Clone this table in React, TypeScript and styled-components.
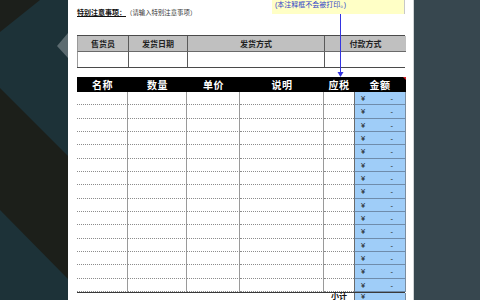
import React from 'react';
import styled, { createGlobalStyle } from 'styled-components';

const GlobalStyle = createGlobalStyle`
  html, body {
    margin: 0;
    padding: 0;
  }
  body {
    width: 480px;
    height: 300px;
    overflow: hidden;
    font-family: "Liberation Sans", "Noto Sans CJK SC", sans-serif;
  }
`;

const Screen = styled.div`
  display: flex;
  width: 480px;
  height: 300px;
  overflow: hidden;
`;

const LeftBackdrop = styled.div`
  flex: none;
  width: 68px;
  height: 300px;
  background: #1d3238;
  svg {
    display: block;
  }
`;

const RightBackdrop = styled.div`
  flex: 1;
  background: #37474f;
`;

const Sheet = styled.div`
  position: relative;
  flex: none;
  width: 346px;
  box-sizing: border-box;
  padding: 0 8px 0 9px;
  background: #fff;
  border-right: 1px solid #cfd4d6;
`;

const NoteLine = styled.div`
  display: flex;
  align-items: baseline;
  padding-top: 7px;
  height: 12px;
  line-height: 12px;
`;

const NoteLabel = styled.span`
  font-size: 7px;
  font-weight: 700;
  color: #111;
  text-decoration: underline;
`;

const NoteHint = styled.span`
  font-size: 6.4px;
  color: #333;
`;

const InfoTable = styled.div`
  display: grid;
  grid-template-columns: 51px 59px 137px 82px;
  grid-template-rows: 16px 15px;
  margin-top: 16px;
  border-top: 1px solid #4a4a4a;
  border-bottom: 1px solid #4a4a4a;
  border-right: 1px solid #4a4a4a;
`;

const InfoCell = styled.div<{ $head?: boolean; $first?: boolean }>`
  display: flex;
  align-items: center;
  justify-content: center;
  box-sizing: border-box;
  background: ${(p) => (p.$head ? '#c0c0c0' : '#fff')};
  border-left: 1px solid ${(p) => (p.$first ? '#9a9a9a' : '#5a5a5a')};
  border-bottom: ${(p) => (p.$head ? '1px solid #6a6a6a' : 'none')};
  font-size: 8px;
  font-weight: 700;
  color: #222;
`;

const ItemTable = styled.div`
  margin-top: 9px;
`;

const Row = styled.div<{ $height: number }>`
  display: grid;
  grid-template-columns: 51px 59px 53px 84px 30px 52px;
  height: ${(p) => p.$height}px;
`;

const HeadCell = styled.div`
  position: relative;
  display: flex;
  align-items: center;
  justify-content: center;
  background: #000;
  color: #fff;
  font-size: 10px;
  font-weight: 700;
  letter-spacing: 0.5px;
`;

const RedMark = styled.span`
  position: absolute;
  top: 0;
  right: 0;
  width: 0;
  height: 0;
  border-top: 3px solid #d8202a;
  border-left: 3px solid transparent;
`;

const BodyCell = styled.div<{ $last?: boolean }>`
  box-sizing: border-box;
  background: #fff;
  border-bottom: 1px dotted #8c8c8c;
  border-right: ${(p) => (p.$last ? 'none' : '1px solid #9a9a9a')};
`;

const MoneyCell = styled.div`
  display: flex;
  align-items: center;
  justify-content: space-between;
  box-sizing: border-box;
  padding: 0 12px 0 6px;
  background: #9fcdf8;
  border-left: 1px solid #6a6a6a;
  border-right: 1px solid #7a8da0;
  border-bottom: 1px solid #6f8cab;
  font-size: 7.5px;
  color: #222;
`;

const TotalRow = styled(Row)`
  border-top: 1px solid #3a3a3a;
`;

const TotalLabel = styled.div`
  display: flex;
  align-items: flex-end;
  justify-content: center;
  font-size: 8px;
  font-weight: 700;
  color: #111;
  line-height: 8px;
  padding-bottom: 1px;
`;

const TotalMoney = styled(MoneyCell)`
  border-bottom: none;
  align-items: flex-end;
  line-height: 8px;
  padding-bottom: 1px;
`;

const CommentBox = styled.div`
  position: absolute;
  left: 204px;
  top: -6px;
  width: 133px;
  height: 20px;
  box-sizing: border-box;
  padding: 6px 0 0 3px;
  background: #ffffc6;
  border-right: 1px solid #c8c8c8;
  font-size: 7px;
  line-height: 9px;
  color: #2f3fc8;
`;

const Arrow = styled.svg`
  position: absolute;
  left: 269px;
  top: 14px;
`;

const rows = Array.from({ length: 15 }, (_, i) => i);

const App: React.FC = () => (
  <>
    <GlobalStyle />
    <Screen>
      <LeftBackdrop>
        <svg width="68" height="300" viewBox="0 0 68 300">
          <polygon points="0,0 40,0 0,32" fill="#1c1f1b" />
          <polygon points="0,88 68,156 68,279 0,210" fill="#1c1f1a" />
          <polygon points="68,33 57,46 68,58" fill="#5c6b70" />
        </svg>
      </LeftBackdrop>
      <Sheet>
        <NoteLine>
          <NoteLabel>特别注意事项：</NoteLabel>
          <NoteHint>（请输入特别注意事项）</NoteHint>
        </NoteLine>
        <InfoTable>
          <InfoCell $head $first>售货员</InfoCell>
          <InfoCell $head>发货日期</InfoCell>
          <InfoCell $head>发货方式</InfoCell>
          <InfoCell $head>付款方式</InfoCell>
          <InfoCell $first />
          <InfoCell />
          <InfoCell />
          <InfoCell />
        </InfoTable>
        <ItemTable>
          <Row $height={15}>
            <HeadCell>名称</HeadCell>
            <HeadCell>数量</HeadCell>
            <HeadCell>单价</HeadCell>
            <HeadCell>说明</HeadCell>
            <HeadCell>应税</HeadCell>
            <HeadCell>
              金额
              <RedMark />
            </HeadCell>
          </Row>
          {rows.map((i) => (
            <Row key={i} $height={i % 3 === 1 ? 14 : 13}>
              <BodyCell />
              <BodyCell />
              <BodyCell />
              <BodyCell />
              <BodyCell $last />
              <MoneyCell>
                <span>¥</span>
                <span>-</span>
              </MoneyCell>
            </Row>
          ))}
          <TotalRow $height={9}>
            <div />
            <div />
            <div />
            <div />
            <TotalLabel>小计</TotalLabel>
            <TotalMoney>
              <span>¥</span>
            </TotalMoney>
          </TotalRow>
        </ItemTable>
        <CommentBox>(本注释框不会被打印。)</CommentBox>
        <Arrow width="7" height="64" viewBox="0 0 7 64">
          <line x1="3.5" y1="0" x2="3.5" y2="59" stroke="#3434e0" strokeWidth="1" />
          <polygon points="0.5,58 6.5,58 3.5,63" fill="#3434e0" />
        </Arrow>
      </Sheet>
      <RightBackdrop />
    </Screen>
  </>
);

export default App;
